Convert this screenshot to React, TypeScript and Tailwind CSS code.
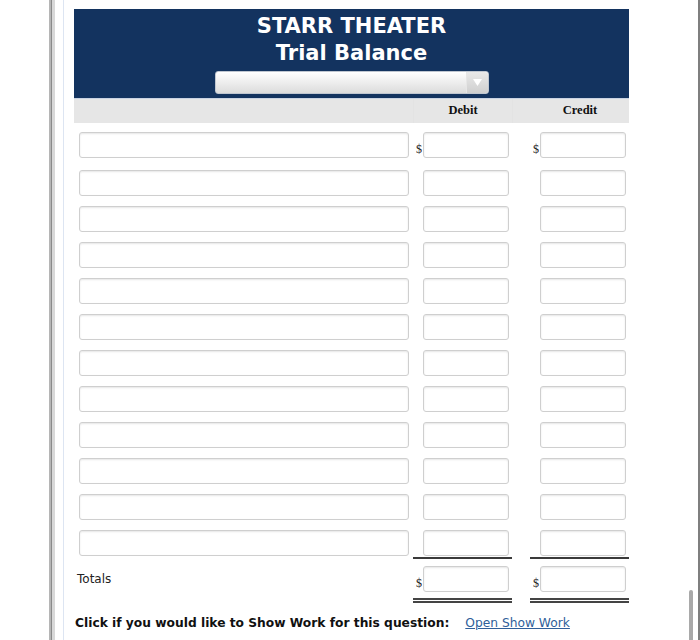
import React from "react";

const inputCls =
  "h-[26px] bg-white border border-[#cfcfcf] rounded-[3px] shadow-[inset_0_1px_2px_rgba(0,0,0,0.10)]";

function Money({ dollar }: { dollar: boolean }) {
  return (
    <div className="w-[99px] flex items-end">
      <div className="w-[10px] pl-[3px] pb-[2px] text-[12px] leading-[14px] text-[#222]" style={{ fontFamily: '"Liberation Serif", serif' }}>
        {dollar ? "$" : ""}
      </div>
      <div className={`${inputCls} w-[86px]`} />
    </div>
  );
}

function Row({ first, idx }: { first: boolean; idx: number }) {
  return (
    <div className={`flex ${first ? "mt-[9px]" : idx === 1 ? "mt-[12px]" : "mt-[10px]"}`}>
      <div className="w-[339px] pl-[5px]">
        <div className={`${inputCls} w-[330px]`} />
      </div>
      <Money dollar={first} />
      <div className="w-[18px]" />
      <Money dollar={first} />
    </div>
  );
}

export default function App() {
  const rows = Array.from({ length: 12 }, (_, i) => i);
  return (
    <div className="relative w-[700px] h-[640px] overflow-hidden bg-white flex" style={{ fontFamily: '"DejaVu Sans", Verdana, sans-serif' }}>
      <div className="w-[49px]" />
      <div className="w-[6px] h-full bg-[#cdcdcd] flex">
        <div className="w-[2px] h-full bg-[#b5b5b5]" />
        <div className="w-[1px] h-full bg-[#8a8a8a]" />
        <div className="w-[3px] h-full bg-[#d8d8d8]" />
      </div>
      <div className="w-[8px]" />
      <div className="w-[1px] h-full bg-[#dde5f2]" />
      <div className="w-[10px]" />
      <div className="w-[555px] flex flex-col pt-[9px]">
        <div className="bg-[#13335f] h-[89px] flex flex-col items-center pt-[4px]">
          <div className="text-white font-bold text-[21px] leading-[27px]">STARR THEATER</div>
          <div className="text-white font-bold text-[21px] leading-[27px]">Trial Balance</div>
          <div className="mt-[4px] w-[274px] h-[23px] rounded-[3px] bg-gradient-to-b from-[#ffffff] to-[#dcdcdc] border border-[#bfc6d0] flex justify-end">
            <div className="w-[22px] h-full border-l border-[#e6e6e6] bg-gradient-to-b from-[#e9e9e9] to-[#cfcfcf] rounded-r-[3px] flex items-center justify-center">
              <svg width="9" height="7" viewBox="0 0 9 7">
                <path d="M0 0 L9 0 L4.5 7 Z" fill="#ffffff" />
              </svg>
            </div>
          </div>
        </div>
        <div className="h-[1px] bg-[#c9d3e2]" />
        <div className="h-[24px] bg-[#e6e6e6] flex items-center font-bold text-[12.5px] text-[#111]" style={{ fontFamily: '"Liberation Serif", serif' }}>
          <div className="w-[339px] h-full" />
          <div className="w-[99px] text-center border-l border-[#e3e3e3] h-full flex items-center justify-center pb-[2px]">Debit</div>
          <div className="w-[117px] h-full flex items-center justify-center pl-[18px] border-l border-[#e3e3e3] pb-[2px]">Credit</div>
        </div>
        {rows.map((i) => (
          <Row key={i} first={i === 0} idx={i} />
        ))}
        <div className="flex mt-[1px]">
          <div className="w-[339px]" />
          <div className="w-[99px] h-[2px] bg-[#3a3a3a]" />
          <div className="w-[18px]" />
          <div className="w-[99px] h-[2px] bg-[#3a3a3a]" />
        </div>
        <div className="flex mt-[7px]">
          <div className="w-[339px] pl-[3px] flex items-center text-[12px] text-[#222]">Totals</div>
          <Money dollar={true} />
          <div className="w-[18px]" />
          <Money dollar={true} />
        </div>
        <div className="flex mt-[6px]">
          <div className="w-[339px]" />
          <div className="w-[99px] h-[5px] border-y-2 border-[#444]" />
          <div className="w-[18px]" />
          <div className="w-[99px] h-[5px] border-y-2 border-[#444]" />
        </div>
        <div className="mt-[12px] flex items-center text-[12.25px] leading-[16px] pl-[1px]">
          <span className="font-bold text-[#111]">Click if you would like to Show Work for this question:</span>
          <span className="ml-[16px] text-[#2f5f9a] underline">Open Show Work</span>
        </div>
      </div>
      <div className="flex-1" />
      <div className="w-[2px] h-full bg-[#7f7f7f]" />
      <div className="absolute left-[689px] top-[590px] w-[4px] h-[60px] rounded-[2px] bg-[#a9a9a9]" />
    </div>
  );
}
